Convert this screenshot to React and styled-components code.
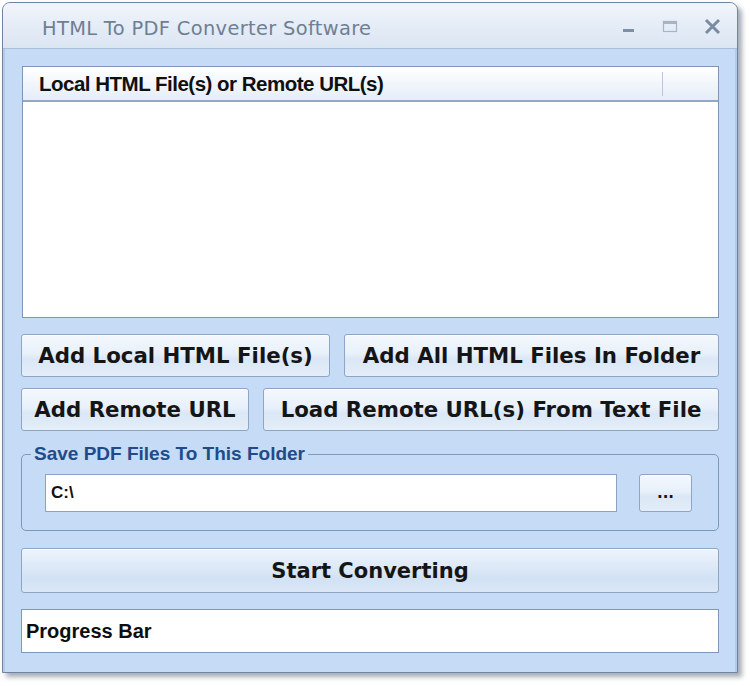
import React from 'react'
import styled, { createGlobalStyle } from 'styled-components'

const GlobalStyle = createGlobalStyle`
  html, body {
    margin: 0;
    padding: 0;
    background: #ffffff;
  }
  * {
    box-sizing: border-box;
  }
`

const Page = styled.div`
  width: 750px;
  height: 686px;
  padding: 2px 0 0 2px;
`

const Window = styled.div`
  width: 736px;
  height: 671px;
  border: 1px solid #6e84a0;
  border-radius: 8px 8px 0 0;
  background: #c5dbf6;
  box-shadow: 4px 4px 5px rgba(60, 70, 90, 0.45);
  display: flex;
  flex-direction: column;
  overflow: hidden;
`

const TitleBar = styled.div`
  height: 46px;
  flex-shrink: 0;
  display: flex;
  align-items: center;
  padding: 6px 16px 0 39px;
  background: linear-gradient(#f1f5fb, #e3ebf6 60%, #dbe5f2);
  border-bottom: 1px solid #a9bfd9;
`

const Title = styled.div`
  flex: 1;
  font-family: 'DejaVu Sans', Verdana, sans-serif;
  font-size: 19.4px;
  color: #6f7f93;
  letter-spacing: 0.35px;
`

const Controls = styled.div`
  display: flex;
  align-items: center;
  gap: 26px;
  margin-top: -4px;
  color: #8797ad;
`

const Client = styled.div`
  flex: 1;
  display: flex;
  flex-direction: column;
  padding: 17px 16px 0 16px;
  border-left: 2px solid #b3cbea;
  border-right: 2px solid #b3cbea;
`

const ListView = styled.div`
  height: 252px;
  margin-left: 1px;
  background: #ffffff;
  border: 1px solid #7d96b6;
  display: flex;
  flex-direction: column;
`

const ListHeader = styled.div`
  height: 35px;
  display: flex;
  align-items: center;
  background: linear-gradient(#ffffff, #f2f6fb 50%, #e4edf8);
  border-bottom: 2px solid #91a8c6;
`

const HeaderCell = styled.div`
  flex: ${({ grow }) => grow || 'none'};
  width: ${({ w }) => (w ? `${w}px` : 'auto')};
  height: 24px;
  display: flex;
  align-items: center;
  padding-left: 16px;
  font-family: 'Liberation Sans', Arial, sans-serif;
  font-weight: bold;
  font-size: 20.5px;
  letter-spacing: -0.5px;
  color: #101010;
  border-right: ${({ divider }) => (divider ? '1px solid #b8c7da' : 'none')};
`

const ButtonRow = styled.div`
  display: flex;
  gap: 14px;
  margin-top: ${({ mt }) => mt}px;
`

const Button = styled.button`
  height: ${({ h }) => h || 43}px;
  width: ${({ w }) => (w ? `${w}px` : 'auto')};
  flex: ${({ grow }) => (grow ? 1 : 'none')};
  padding: 0;
  border: 1px solid #8ea6c4;
  border-radius: 3px;
  background: linear-gradient(#f4f8fd, #e8f0fa 45%, #dbe7f6 60%, #e4eef9);
  box-shadow: inset 0 1px 0 #ffffff;
  font-family: 'DejaVu Sans', Verdana, sans-serif;
  font-weight: bold;
  font-size: ${({ fs }) => fs || 21.3}px;
  color: #151515;
  cursor: default;
`

const BigButton = styled(Button)`
  margin-top: 17px;
  background: linear-gradient(#eef4fc, #e2ecf8 30%, #d2e2f4 70%, #dbe7f6);
`

const GroupBox = styled.fieldset`
  margin: 13px 0 0 0;
  padding: 10px 24px 18px 23px;
  border: 1px solid #7f99ba;
  border-radius: 5px;
`

const GroupLegend = styled.legend`
  margin-left: -14px;
  padding: 0 3px;
  line-height: 20px;
  font-family: 'Liberation Sans', Arial, sans-serif;
  font-weight: bold;
  font-size: 19px;
  color: #1f4c89;
`

const PathRow = styled.div`
  display: flex;
  align-items: center;
  gap: 22px;
`

const PathInput = styled.div`
  width: 572px;
  height: 38px;
  background: #ffffff;
  border: 1px solid #8ba3c2;
  display: flex;
  align-items: center;
  padding-left: 5px;
  font-family: 'Liberation Sans', Arial, sans-serif;
  font-weight: bold;
  font-size: 17px;
  color: #111111;
`

const Progress = styled.div`
  height: 44px;
  margin-top: 16px;
  background: #ffffff;
  border: 1px solid #7f98b8;
  display: flex;
  align-items: center;
  padding-left: 4px;
  font-family: 'Liberation Sans', Arial, sans-serif;
  font-weight: bold;
  font-size: 20px;
  color: #0e0e0e;
`

function WindowControls() {
  return (
    <Controls>
      <svg width="14" height="14" viewBox="0 0 14 14">
        <rect x="1" y="9" width="11" height="3" fill="#7f8fa5" />
      </svg>
      <svg width="16" height="14" viewBox="0 0 16 14">
        <rect x="1.5" y="1.5" width="13" height="10" fill="none" stroke="#a7b4c6" strokeWidth="1.2" />
        <rect x="1.5" y="1.5" width="13" height="2.5" fill="#a7b4c6" />
      </svg>
      <svg width="17" height="17" viewBox="0 0 17 17">
        <path d="M2 2 L15 15 M15 2 L2 15" stroke="#7b8ba1" strokeWidth="3" strokeLinecap="butt" />
      </svg>
    </Controls>
  )
}

export default function App() {
  return (
    <Page>
      <GlobalStyle />
      <Window>
        <TitleBar>
          <Title>HTML To PDF Converter Software</Title>
          <WindowControls />
        </TitleBar>
        <Client>
          <ListView>
            <ListHeader>
              <HeaderCell w={640} divider>
                Local HTML File(s) or Remote URL(s)
              </HeaderCell>
              <HeaderCell grow={1} />
            </ListHeader>
          </ListView>

          <ButtonRow mt={16}>
            <Button w={309}>Add Local HTML File(s)</Button>
            <Button grow>Add All HTML Files In Folder</Button>
          </ButtonRow>
          <ButtonRow mt={11}>
            <Button w={228}>Add Remote URL</Button>
            <Button grow>Load Remote URL(s) From Text File</Button>
          </ButtonRow>

          <GroupBox>
            <GroupLegend>Save PDF Files To This Folder</GroupLegend>
            <PathRow>
              <PathInput>C:\</PathInput>
              <Button w={53} h={38} fs={15}>
                ...
              </Button>
            </PathRow>
          </GroupBox>

          <BigButton h={45} fs={21}>
            Start Converting
          </BigButton>

          <Progress>Progress Bar</Progress>
        </Client>
      </Window>
    </Page>
  )
}
